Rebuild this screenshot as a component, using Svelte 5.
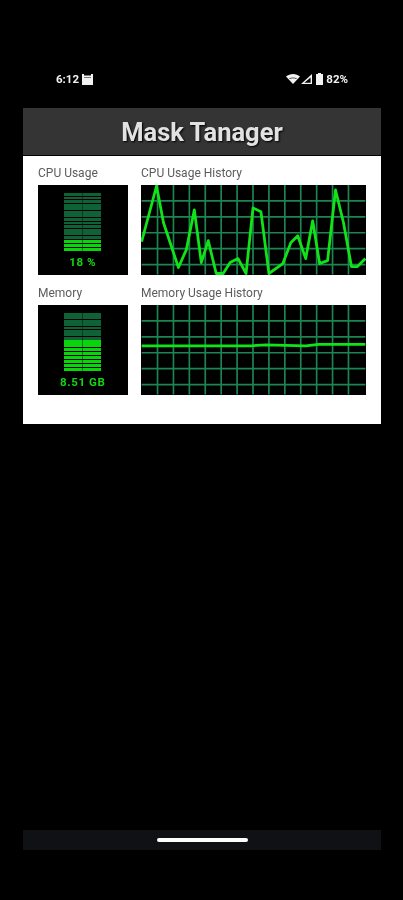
<script>
  // points traced in chart units (225 x 90)
  const cpu = [[0,57],[15,1],[22,38],[37,83],[45,65],[53,25],[60,78],[67,56],[75,89],[82,89],[89,78],[97,74],[105,89],[112,23],[120,27],[128,89],[142,79],[150,58],[157,51],[165,74],[172,36],[179,79],[187,76],[195,5],[203,38],[211,82],[217,82],[225,74]];
  const mem = [[0,41],[60,41],[110,41],[125,40],[165,41],[178,39.5],[225,39.5]];

  const gridX = Array.from({ length: 13 }, (_, i) => (i + 1) * 16);
  const gridY = [16, 32, 48, 64, 80];

  const charts = [
    { gauge: "CPU Usage", value: "18 %", lit: 3, history: "CPU Usage History", points: cpu },
    { gauge: "Memory", value: "8.51 GB", lit: 8, history: "Memory Usage History", points: mem }
  ];

  const SEGMENTS = 16;

  function toPoints(list) {
    return list.map((p) => p.join(",")).join(" ");
  }
</script>

<div class="screen">
  <div class="status">
    <div class="status-side">
      <span>6:12</span>
      <svg class="notif" viewBox="0 0 11 11">
        <path d="M0 0h2v1.500h7V0h2v11H0z" fill="#f2f2f2" />
        <rect x="2" y="3" width="7" height="1" fill="#777" />
      </svg>
    </div>
    <div class="status-side">
      <svg class="wifi" viewBox="0 0 14 10">
        <path d="M0 2.600C2 .9 4.400 0 7 0s5 .9 7 2.600L7 10z" fill="#f2f2f2" />
        <path d="M3 4.400C4.200 3.700 5.500 3.400 7 3.400s2.800.3 4 1l-.6.7C9.300 4.600 8.200 4.300 7 4.300s-2.300.3-3.400.8z" fill="#333" />
      </svg>
      <svg class="signal" viewBox="0 0 11 10">
        <path d="M11 0v10H0zM9.600 3.400 3.400 8.700h6.200z" fill="#f2f2f2" fill-rule="evenodd" />
      </svg>
      <svg class="battery" viewBox="0 0 7 12">
        <path d="M2 0h3v1h2v11H0V1h2z" fill="#f2f2f2" />
      </svg>
      <span>82%</span>
    </div>
  </div>

  <main class="window">
    <header class="title">Mask Tanager</header>
    <section class="panel">
      {#each charts as c}
        <div class="cell">
          <p class="label">{c.gauge}</p>
          <div class="gauge">
            <div class="bars">
              {#each Array(SEGMENTS) as _, i}
                <div class="seg" class:lit={SEGMENTS - i <= c.lit}></div>
              {/each}
            </div>
            <div class="value">{c.value}</div>
          </div>
        </div>
        <div class="cell">
          <p class="label">{c.history}</p>
          <svg class="history" viewBox="0 0 225 90">
            {#each gridX as x}
              <line x1={x} y1="0" x2={x} y2="90" />
            {/each}
            {#each gridY as y}
              <line x1="0" y1={y} x2="225" y2={y} />
            {/each}
            <polyline points={toPoints(c.points)} />
          </svg>
        </div>
      {/each}
    </section>
  </main>

  <div class="nav"><div class="pill"></div></div>
</div>

<style>
  :global(body) {
    background: #000;
  }

  .screen {
    height: 900px;
    display: flex;
    flex-direction: column;
    font-family: Roboto, "Liberation Sans", sans-serif;
    filter: blur(0.6px);
    overflow: hidden;
  }

  .status {
    display: flex;
    justify-content: space-between;
    align-items: center;
    height: 16px;
    padding: 71px 55px 0 56px;
    color: #f2f2f2;
    font-size: 11.500px;
    font-weight: 700;
  }

  .status-side {
    display: flex;
    align-items: center;
  }

  .notif {
    width: 11px;
    height: 11px;
    margin-left: 3px;
  }

  .wifi {
    width: 14px;
    height: 10px;
  }

  .signal {
    width: 11px;
    height: 10px;
    margin-left: 1px;
  }

  .battery {
    width: 7px;
    height: 12px;
    margin: 0 3px 0 4px;
  }

  .window {
    margin: 21px 22px 0 23px;
  }

  .title {
    height: 47px;
    background: #343434;
    color: #e2e2e2;
    font-size: 25.500px;
    font-weight: 700;
    line-height: 49px;
    text-align: center;
    text-shadow: 1px 1px 2px #000;
  }

  .panel {
    background: #fff;
    margin-top: 1px;
    height: 268px;
    box-sizing: border-box;
    padding: 9px 15px 0;
    display: grid;
    grid-template-columns: 89.500px 225px;
    justify-content: space-between;
    grid-auto-rows: 120px;
  }

  .label {
    margin: 0;
    height: 20px;
    line-height: 17px;
    font-size: 12px;
    color: #5c5c5c;
  }

  .gauge {
    height: 89.500px;
    background: #000;
    box-sizing: border-box;
    padding-top: 8px;
    display: flex;
    flex-direction: column;
    align-items: center;
  }

  .bars {
    width: 37px;
    height: 58px;
    display: flex;
    flex-direction: column;
    justify-content: space-between;
  }

  .seg {
    height: 2.800px;
    background: linear-gradient(to right, #0f6235 49%, #083a1e 49%, #083a1e 51%, #0f6235 51%);
  }

  .seg.lit {
    height: 3.300px;
    background: linear-gradient(to right, #0ad40c 49%, #087d12 49%, #087d12 51%, #0ad40c 51%);
  }

  .value {
    margin-top: 4px;
    color: #12d612;
    font-size: 11.500px;
    font-weight: 700;
    letter-spacing: 0.6px;
    line-height: 14px;
    white-space: nowrap;
  }

  .history {
    display: block;
    width: 225px;
    height: 89.500px;
    background: #000;
  }

  .history line {
    stroke: #1c8550;
    stroke-width: 1.700;
  }

  .history polyline {
    fill: none;
    stroke: #10e418;
    stroke-width: 2.800;
    stroke-linejoin: round;
  }

  .nav {
    margin: auto 22px 50px 23px;
    height: 20px;
    background: #0f1114;
    display: flex;
    justify-content: center;
    align-items: center;
  }

  .pill {
    width: 91px;
    height: 3.500px;
    background: #fff;
    border-radius: 2px;
  }
</style>
